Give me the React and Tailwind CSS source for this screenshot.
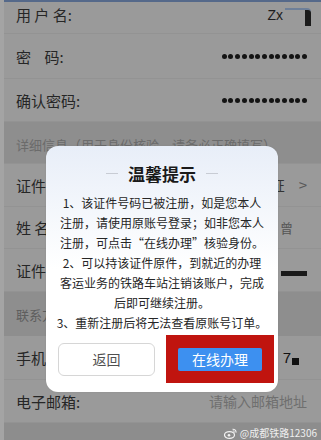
import React from "react";

const font = { fontFamily: '"Noto Sans CJK SC", "Noto Sans", sans-serif' };

function Dots() {
  return (
    <div className="flex gap-[1.7px]">
      {Array.from({ length: 13 }).map((_, i) => (
        <span key={i} className="w-[5px] h-[5px] rounded-full bg-[#141414]" />
      ))}
    </div>
  );
}

function Row({ label, right, h = "h-[43px]", extra = "" }) {
  return (
    <div className={`flex items-center justify-between ${h} pl-[12px] pr-[14px] border-b border-[#939393] ${extra}`}>
      <span className="text-[15px] text-[#262626] whitespace-pre leading-none">{label}</span>
      {right}
    </div>
  );
}

function Weibo() {
  return (
    <svg width="13" height="11" viewBox="0 0 13 11">
      <ellipse cx="5.5" cy="7" rx="5" ry="3.4" fill="none" stroke="#f2f2f2" strokeWidth="1.2" />
      <circle cx="5" cy="7.3" r="1.3" fill="#f2f2f2" />
      <path d="M8.5 1.2 C10.8 1 12.3 2.6 12 4.6" fill="none" stroke="#f2f2f2" strokeWidth="1.1" />
      <path d="M8.8 2.9 C9.9 2.8 10.6 3.6 10.4 4.5" fill="none" stroke="#f2f2f2" strokeWidth="1" />
    </svg>
  );
}

export default function App() {
  const lines = [
    "1、该证件号码已被注册，如是您本人",
    "注册，请使用原账号登录；如非您本人",
    "注册，可点击“在线办理”核验身份。",
    "2、可以持该证件原件，到就近的办理",
    "客运业务的铁路车站注销该账户，完成",
    "后即可继续注册。",
    "3、重新注册后将无法查看原账号订单。",
  ];
  return (
    <div className="relative w-[321px] h-[440px] overflow-hidden bg-[#9a9a9a] border-l-[4px] border-[#a4a4a4]" style={font}>
      <div className="h-[2px] bg-[#55698a]" />
      <div className="flex items-center justify-between h-[32px] pb-[6px] pl-[12px] pr-[10px] border-b border-[#939393]">
        <span className="text-[15px] text-[#262626] leading-none whitespace-pre">用 户 名:</span>
        <div className="flex items-center">
          <span className="text-[14px] text-[#1e1e1e] leading-none" style={{ fontFamily: '"Liberation Sans", sans-serif' }}>Zx</span>
          <div className="w-[26px] h-[14px] ml-[2px] rounded-tr-[4px] border-t-[2px] border-[#6d7f99] bg-[#9a9a9a] relative">
            <div className="absolute right-0 top-0 w-[6px] h-[16px] bg-[#1b1b1b] rounded-tr-[3px]" />
          </div>
        </div>
      </div>
      <Row label={"密    码:"} h="h-[45px]" right={<Dots />} />
      <Row label={"确认密码:"} h="h-[43px]" right={<Dots />} />
      <div className="h-[42px] bg-[#8e8e8e] pl-[12px] pt-[16px] border-b border-[#939393] flex items-start">
        <span className="text-[13px] text-[#6b6b6b] leading-none whitespace-nowrap">详细信息（用于身份核验，请务必正确填写）</span>
      </div>
      <Row
        label="证件类型"
        right={
          <div className="flex items-center gap-[14px] text-[14px] text-[#333]">
            <span>证</span>
            <span className="text-[#5a5a5a] text-[15px]">&gt;</span>
          </div>
        }
      />
      <Row label="姓 名" h="h-[42px]" right={<span className="text-[13px] text-[#555] mr-[14px]">曾</span>} />
      <Row
        label="证件号码"
        right={
          <div className="flex items-center mt-[6px]">
            <span className="text-[12px] text-[#333] mr-[2px]">·</span>
            <div className="w-[26px] h-[5px] bg-[#1a1a1a]" />
          </div>
        }
      />
      <div className="h-[44px] bg-[#8e8e8e] pl-[12px] flex items-center">
        <span className="text-[13px] text-[#5e5e5e] leading-none">联系方式</span>
      </div>
      <Row
        label="手机号码"
        h="h-[44px]"
        right={
          <div className="flex items-end mr-[8px]">
            <span className="text-[15px] text-[#111] leading-none" style={{ fontFamily: '"Liberation Sans", sans-serif' }}>7</span>
            <span className="w-[7px] h-[7px] bg-[#111] ml-[1px]" />
          </div>
        }
      />
      <Row
        label="电子邮箱:"
        right={<span className="text-[14px] text-[#6f6f6f] leading-none">请输入邮箱地址</span>}
      />
      <div className="h-[20px] bg-[#8d8d8d] flex items-center justify-end pr-[4px] gap-[3px]">
        <Weibo />
        <span className="text-[10px] text-[#efefef] leading-none">@成都铁路12306</span>
      </div>

      <div className="absolute left-[42px] top-[146px] w-[232px] rounded-[12px] bg-gradient-to-b from-[#e8eef8] via-white to-white pt-[15px] pb-[9px] shadow-[0_0_2px_rgba(0,0,0,0.08)]">
        <div className="flex items-center justify-center h-[24px] gap-[10px]">
          <span className="w-[12px] h-[1px] bg-[#c8ccd4]" />
          <span className="text-[17px] font-bold text-[#1a1a1a] leading-none">温馨提示</span>
          <span className="w-[12px] h-[1px] bg-[#c8ccd4]" />
        </div>
        <div className="mt-[8px] flex flex-col items-center">
          {lines.map((l, i) => (
            <div key={i} className="h-[20px] leading-[20px] text-[12px] text-[#262626] whitespace-nowrap">
              {l}
            </div>
          ))}
        </div>
        <div className="mt-[2px] flex items-center pl-[12px] gap-[11px]">
          <div className="w-[97px] h-[33px] rounded-[6px] border border-[#d6d6d6] bg-white flex items-center justify-center text-[14px] text-[#505050]">
            返回
          </div>
          <div className="w-[108px] h-[48px] bg-[#c0140f] flex items-center justify-center">
            <div className="w-[84px] h-[23px] bg-[#3d90f0] rounded-[2px] flex items-center justify-center text-[14px] text-white">
              在线办理
            </div>
          </div>
        </div>
      </div>
    </div>
  );
}
